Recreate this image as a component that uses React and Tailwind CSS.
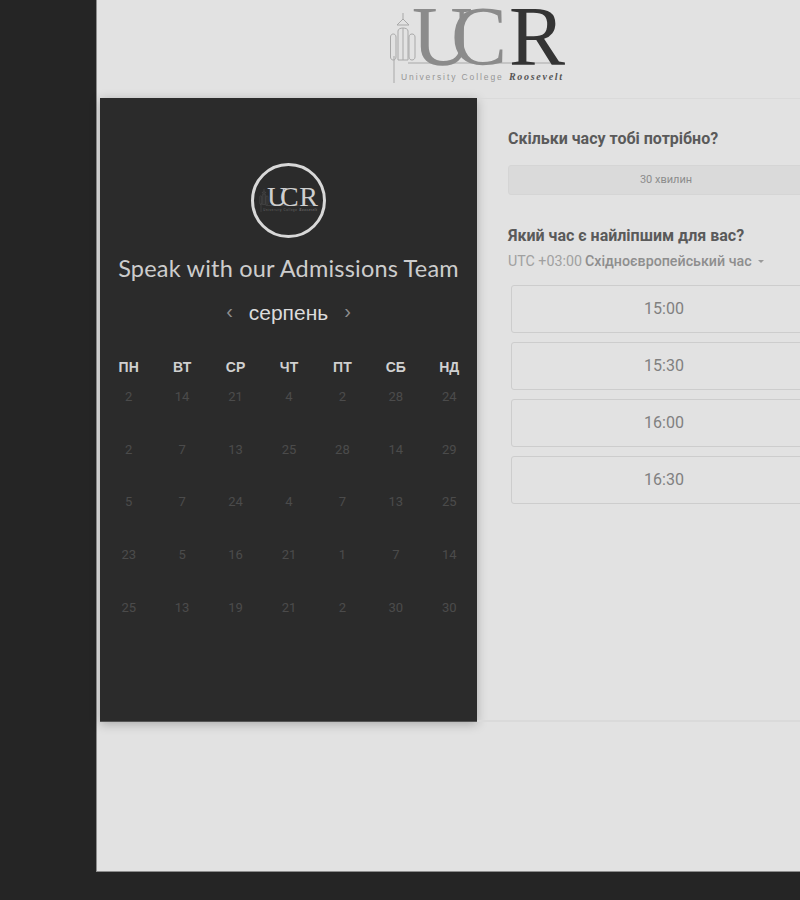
import React from "react";

const DAYS = ["ПН", "ВТ", "СР", "ЧТ", "ПТ", "СБ", "НД"];
const DATES = [
  2, 14, 21, 4, 2, 28, 24,
  2, 7, 13, 25, 28, 14, 29,
  5, 7, 24, 4, 7, 13, 25,
  23, 5, 16, 21, 1, 7, 14,
  25, 13, 19, 21, 2, 30, 30,
];
const SLOTS = ["15:00", "15:30", "16:00", "16:30"];

const UcrLogo = ({ className, main, accent, line, small, script }) => (
  <svg viewBox="0 0 180 80" className={className} fill="none">
    {/* tower */}
    <g stroke={line} strokeWidth="1">
      <path d="M6 48V75M20 55H176" />
      <path d="M15 5V11L9 17M15 11L21 17M9 17H21" />
      <path d="M2.500 29c0-4 5.500-4 5.500 0v20c0 4-5.500 4-5.500 0zM21 29c0-4 6-4 6 0v20c0 4-6 4-6 0z" />
      <path d="M10 23c0-4 10-4 10 0v29H10z" />
      <path d="M15 20V52" />
    </g>
    <text x="24" y="57" fontSize="84" fill={main} fontFamily="Liberation Serif, serif">U</text>
    <text x="63" y="57" fontSize="84" fill={main} fontFamily="Liberation Serif, serif">C</text>
    <text x="121" y="57" fontSize="84" fill={accent} fontFamily="Liberation Serif, serif">R</text>
    <text x="13" y="71.500" fontSize="8.500" letterSpacing="1.900" fill={small} fontFamily="Liberation Sans, sans-serif">University College</text>
    <text x="121" y="71.500" fontSize="10" letterSpacing="1.700" fontWeight="700" fontStyle="italic" fill={script} fontFamily="Liberation Serif, serif">Roosevelt</text>
  </svg>
);

const App = () => {
  return (
    <div className="w-[800px] h-[900px] overflow-hidden bg-[#252525] font-['Liberation_Sans',sans-serif]">
      <div className="ml-[96px] w-[764px] h-[872px] bg-[#e2e2e2] border-l border-b border-[#8c8c8c] pl-[3px]">
        <div className="h-[98px] pt-[8px] flex justify-center pr-[4px]">
          <UcrLogo className="w-[180px] h-[80px]" main="#8b8b8b" accent="#343434" line="#a8a8a8" small="#969696" script="#555555" />
        </div>

        <div className="flex h-[624px] w-[756px]">
          {/* calendar side */}
          <div className="w-[377px] shrink-0 bg-[#2b2b2b] shadow-[0_2px_10px_rgba(0,0,0,0.25)] border-b border-[#555] pt-[65px] flex flex-col items-center">
            <div className="w-[75px] h-[75px] rounded-full border-[3px] border-[#d8d8d8] flex items-center justify-center">
              <UcrLogo className="w-[60px] h-[27px]" main="#cfcfcf" accent="#cfcfcf" line="#666" small="#6e6e6e" script="#6e6e6e" />
            </div>
            <h1 className="mt-[14px] text-[23.5px] leading-[32px] text-[#cdcdcd] font-['Lato',sans-serif] font-normal tracking-[0.2px] whitespace-nowrap">
              Speak with our Admissions Team
            </h1>
            <div className="mt-[14px] flex items-center h-[30px]">
              <span className="w-[22px] text-[#8e8e8e] text-[20px] leading-[26px] text-center pb-[4px]">‹</span>
              <span className="w-[96px] text-center text-[21px] leading-[30px] text-[#dcdcdc]">серпень</span>
              <span className="w-[22px] text-[#8e8e8e] text-[20px] leading-[26px] text-center pb-[4px]">›</span>
            </div>
            <div className="mt-[29px] w-full pl-[2px] pr-[1px] grid grid-cols-7 text-center">
              {DAYS.map((day) => (
                <div key={day} className="h-[30px] text-[14px] leading-[20px] font-bold text-[#d0d0d0]">
                  {day}
                </div>
              ))}
              {DATES.map((date, i) => (
                <div key={i} className="h-[52.67px] text-[13px] leading-[20px] text-[#4b4b4b] font-['Roboto',sans-serif]">
                  {date}
                </div>
              ))}
            </div>
          </div>

          {/* time side */}
          <div className="flex-1 border-t border-b-2 border-[#dadada] pl-[31px] pt-[30px] font-['Roboto',sans-serif]">
            <h2 className="text-[16px] leading-[20px] font-bold text-[#5a5a5a]">Скільки часу тобі потрібно?</h2>
            <div className="mt-[16px] w-[316px] h-[30px] rounded-[3px] border border-[#d5d5d5] bg-[#dadada] flex items-center justify-center text-[11px] text-[#8c8c8c]">
              30 хвилин
            </div>
            <h2 className="mt-[31px] text-[16px] leading-[20px] font-bold text-[#5a5a5a]">Який час є найліпшим для вас?</h2>
            <div className="mt-[5px] flex items-center text-[14.250px] leading-[20px] text-[#a0a0a0] whitespace-nowrap">
              <span>UTC +03:00</span>
              <span className="ml-[3px] font-medium text-[#8e8e8e]">Східноєвропейський час</span>
              <span className="ml-[6px] w-0 h-0 border-x-[3.5px] border-x-transparent border-t-[3.5px] border-t-[#9a9a9a]"></span>
            </div>
            <div className="mt-[14px] ml-[3px] flex flex-col gap-[9px]">
              {SLOTS.map((slot) => (
                <div
                  key={slot}
                  className="w-[306px] h-[48px] rounded-[3px] border border-[#cdcdcd] flex items-center justify-center text-[16px] text-[#808080]"
                >
                  {slot}
                </div>
              ))}
            </div>
          </div>
        </div>
      </div>
    </div>
  );
};

export default App;
